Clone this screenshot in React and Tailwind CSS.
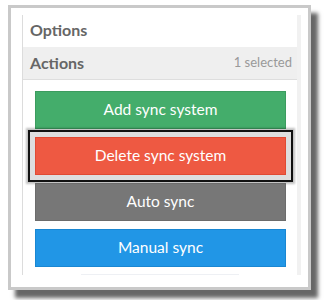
import React from 'react'

const actions = [
  { label: 'Add sync system', cls: 'bg-[#44ad6b] border-[#3c9c5f]' },
  { label: 'Delete sync system', cls: 'bg-[#ee5942] border-[#e04a33] shadow-[0_0_0_5px_#dedede,0_0_0_7px_#111,0_0_2px_9px_rgba(0,0,0,0.25)]' },
  { label: 'Auto sync', cls: 'bg-[#777777] border-[#6c6c6c]' },
  { label: 'Manual sync', cls: 'bg-[#2196e6] border-[#1a87d2]' },
]

const App = () => {
  return (
    <div className="w-[327px] h-[300px] bg-white pl-[8px] pt-[5px] font-['Lato','Liberation_Sans',sans-serif]">
      {/* framed screenshot */}
      <div className="w-[303px] h-[285px] border-[3px] border-[#c9c9c9] bg-white pl-[11px] pr-[7px] pt-[7px] shadow-[7px_8px_4px_rgba(0,0,0,0.6)]">
        <div className="h-[260px] border-l border-[#dcdcdc] border-r-[4px] border-r-[#f1f1f1] flex flex-col">
          <div className="h-[32px] flex items-center pl-[7px] pb-[2px] text-[16px] font-bold text-[#666]">
            Options
          </div>
          <div className="h-[33px] flex items-center justify-between pl-[7px] pr-[5px] bg-[#efefef] border-b border-[#dedede]">
            <span className="text-[16px] font-bold text-[#666]">Actions</span>
            <span className="text-[13px] text-[#999]">1 selected</span>
          </div>
          <div className="flex flex-col gap-[8px] pl-[12px] pr-[11px] pt-[11px]">
            {actions.map((a, i) => (
              <div
                key={i}
                className={`h-[38px] flex items-center justify-center border text-white text-[15.5px] ${a.cls}`}
              >
                {a.label}
              </div>
            ))}
          </div>
          <div className="mt-auto mx-auto w-[158px] h-px bg-[#eef0f4]" />
        </div>
      </div>
    </div>
  )
}

export default App
